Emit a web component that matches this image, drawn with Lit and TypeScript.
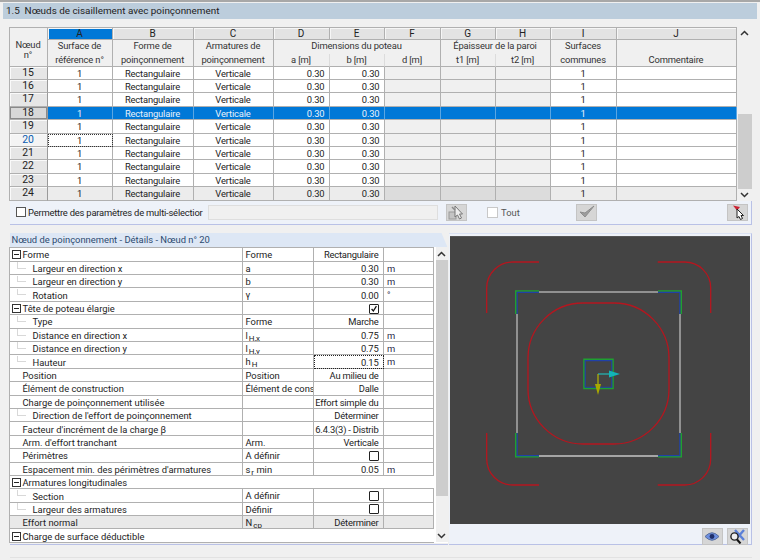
import { LitElement, html, css, svg } from "lit";
import { customElement } from "lit/decorators.js";

const rowNumbers = [15, 16, 17, 18, 19, 20, 21, 22, 23, 24];

interface DetailRow {
  name: string;
  level: number; // 0 = plain, 1 = child, 2 = group with box
  sym?: unknown;
  value?: string;
  unit?: string;
  check?: "on" | "off";
  wide?: boolean;
  focus?: boolean;
  shaded?: boolean;
}

const sub = (a: string, b: string, rest = "") => html`${a}<span class="sub">${b}</span>${rest}`;

const details: DetailRow[] = [
  { name: "Forme", level: 2, sym: "Forme", value: "Rectangulaire" },
  { name: "Largeur en direction x", level: 1, sym: "a", value: "0.30", unit: "m" },
  { name: "Largeur en direction y", level: 1, sym: "b", value: "0.30", unit: "m" },
  { name: "Rotation", level: 1, sym: "γ", value: "0.00", unit: "°" },
  { name: "Tête de poteau élargie", level: 2, check: "on" },
  { name: "Type", level: 1, sym: "Forme", value: "Marche" },
  { name: "Distance en direction x", level: 1, sym: sub("l", "H,x"), value: "0.75", unit: "m" },
  { name: "Distance en direction y", level: 1, sym: sub("l", "H,y"), value: "0.75", unit: "m" },
  { name: "Hauteur", level: 1, sym: sub("h", "H"), value: "0.15", unit: "m", focus: true },
  { name: "Position", level: 0, sym: "Position", value: "Au milieu de" },
  { name: "Élément de construction", level: 0, sym: "Élément de cons", value: "Dalle" },
  { name: "Charge de poinçonnement utilisée", level: 0, value: "Effort simple du" },
  { name: "Direction de l'effort de poinçonnement", level: 1, value: "Déterminer" },
  { name: "Facteur d'incrément de la charge β", level: 0, value: "6.4.3(3) - Distrib" },
  { name: "Arm. d'effort tranchant", level: 0, sym: "Arm.", value: "Verticale" },
  { name: "Périmètres", level: 0, sym: "A définir", check: "off" },
  { name: "Espacement min. des périmètres d'armatures", level: 0, sym: sub("s", "r", " min"), value: "0.05", unit: "m" },
  { name: "Armatures longitudinales", level: 2, wide: true },
  { name: "Section", level: 1, sym: "A définir", check: "off" },
  { name: "Largeur des armatures", level: 1, sym: "Définir", check: "off" },
  { name: "Effort normal", level: 0, sym: sub("N", "cp"), value: "Déterminer", shaded: true },
  { name: "Charge de surface déductible", level: 2, wide: true },
];

/* =========================
   ICONS
========================= */
const chevronUp = html`<svg width="9" height="6" viewBox="0 0 9 6"><path d="M1 5 L4.5 1.5 L8 5" fill="none" stroke="#333" stroke-width="1.5"/></svg>`;
const chevronDown = html`<svg width="9" height="6" viewBox="0 0 9 6"><path d="M1 1 L4.5 4.5 L8 1" fill="none" stroke="#333" stroke-width="1.5"/></svg>`;

const tickMark = html`<svg width="10" height="10" viewBox="0 0 10 10"><path d="M2 5 L4.2 7.5 L8 1.5" fill="none" stroke="#111" stroke-width="1.6"/></svg>`;

const iconTableCursor = html`<svg width="18" height="15" viewBox="0 0 18 15">
  <rect x="2" y="7" width="7" height="7" fill="#c4c4c4" stroke="#9a9a9a"/>
  <path d="M8 1 L8 12 L10.5 10 L12.5 14 L14.5 13 L12.5 9 L15.5 9 Z" fill="#eee" stroke="#777"/>
  <path d="M5 2 L8 5" stroke="#8a8a8a" stroke-width="1.5"/>
</svg>`;

const iconCheck = html`<svg width="18" height="14" viewBox="0 0 18 14">
  <path d="M2 7 L7 12 L16 1 L7 8 Z" fill="#9d9d9d" stroke="#8c8c8c"/>
</svg>`;

const iconPin = html`<svg width="18" height="15" viewBox="0 0 18 15">
  <path d="M4 0.5 L11 2 L8 5.5 Z" fill="#cc2233"/>
  <path d="M8 4 L8 13 L10 11.5 L11.5 14.5 L13.5 13.5 L12 10.5 L14.5 10.5 Z" fill="#fff" stroke="#222"/>
</svg>`;

const iconEye = html`<svg width="16" height="11" viewBox="0 0 16 11">
  <path d="M1 5.5 Q8 -2 15 5.5 Q8 13 1 5.5 Z" fill="#6d8fe0" stroke="#5a6f9c"/>
  <circle cx="8" cy="5.5" r="2.4" fill="#1f2f6a"/>
</svg>`;

const iconZoomX = html`<svg width="18" height="15" viewBox="0 0 18 15">
  <path d="M7 1 L16 11 M16 1 L9 9" stroke="#5b80d8" stroke-width="2.4" fill="none"/>
  <circle cx="6.5" cy="7.5" r="3.6" fill="#eee" stroke="#222" stroke-width="1.4"/>
  <path d="M9 10.5 L12.5 14.5" stroke="#111" stroke-width="2"/>
</svg>`;

/* =========================
   PREVIEW DRAWING
========================= */
const corner = (d1: string, d2: string) => svg`
  <path d=${d1} fill="none" stroke="#1fa030" stroke-width="1.6"/>
  <path d=${d2} fill="none" stroke="#2140a8" stroke-width="1.1"/>
`;

const drawing = html`<svg class="drawing" viewBox="450 236 300 288" width="300" height="288">
  <g fill="none" stroke="#b5161f" stroke-width="1.3">
    <path d="M486.7 313 V288 A26 26 0 0 1 513 262 H539"/>
    <path d="M657.7 262 H684 A26 26 0 0 1 710.7 288 V313"/>
    <path d="M486.7 433 V459 A26 26 0 0 0 513 485 H539"/>
    <path d="M657.7 485 H684 A26 26 0 0 0 710.7 459 V433"/>
    <rect x="528" y="303" width="141" height="141" rx="55"/>
  </g>
  <g fill="none" stroke="#ababab" stroke-width="1.5">
    <path d="M539 292 H658"/>
    <path d="M517 314 V433"/>
    <path d="M680 314 V433"/>
    <path d="M539 456 H658" stroke="#c6c6c6"/>
  </g>
  ${corner("M515.8 314 V291 H539", "M517.2 314 V292.4 H539")}
  ${corner("M658 291 H681.2 V314", "M658 292.4 H679.8 V314")}
  ${corner("M515.8 433 V456.8 H539", "M517.2 433 V455.6 H539")}
  ${corner("M658 456.8 H681.2 V433", "M658 455.6 H679.8 V433")}
  ${corner("M584 359.4 H613 V388.4 H584 Z", "M585.2 360.6 H611.8 V387.2 H585.2 Z")}
  <path d="M598 374 H610" stroke="#2a9c9c" stroke-width="1.6"/>
  <path d="M609 370.5 L620 374 L609 377.5 Z" fill="#12b5b8"/>
  <path d="M598 374 V385" stroke="#b8b800" stroke-width="1.2"/>
  <path d="M595 384 L598 395 L601 384 Z" fill="#a8a800"/>
</svg>`;

/* =========================
   APP
========================= */
@customElement("app-root")
class AppRoot extends LitElement {
  static styles = css`
    :host {
      display: block;
      width: 760px;
      height: 560px;
      overflow: hidden;
      background: #f0f0f0;
      font-family: Roboto, "Liberation Sans", sans-serif;
      font-size: 9.4px;
      color: #222;
    }
    .top-line {
      height: 1.5px;
      background: #a8a8a8;
    }
    .title {
      margin: 1.5px 3px 0;
      height: 16px;
      padding-left: 3px;
      background: #bccddc;
      font-size: 9.9px;
      line-height: 16px;
      color: #1c1c1c;
      white-space: pre;
    }
    .body {
      padding: 8px 8px 0 9.5px;
    }

    /* upper table */
    .upper {
      width: 742px;
      border-right: 1px solid #b9c1e6;
      background: #eef2f9;
      box-sizing: border-box;
    }
    .upper-main {
      display: flex;
      background: #f0f0f0;
    }
    .grid {
      display: grid;
      grid-template-columns: 38px 65px 81px 80px 56px 55px 56px 55px 55px 66px 120px;
      grid-template-rows: 12px 13.5px 13.1px repeat(10, 13.4px);
      border-left: 1px solid #b0b0b0;
      border-top: 1px solid #b0b0b0;
      margin-left: -1px;
    }
    .cell {
      box-sizing: border-box;
      border-right: 1px solid #b0b0b0;
      border-bottom: 1px solid #b0b0b0;
      background: #fff;
      line-height: 13px;
      text-align: center;
      white-space: nowrap;
      overflow: hidden;
      letter-spacing: -0.15px;
    }
    .letter {
      background: #e3e3e3;
      font-size: 10px;
      line-height: 11px;
      box-shadow: inset 1px 1px 0 #f6f6f6;
    }
    .letter.active {
      background: #0078d7;
    }
    .head {
      background: #f0f0f0;
      border-bottom: none;
      color: #333;
      line-height: 11px;
    }
    .head.bottom {
      border-bottom: 1px solid #b0b0b0;
      line-height: 12px;
    }
    .head.inner {
      border-right-color: #dcdcdc;
    }
    .head.node {
      grid-row: span 3;
      padding-top: 11.5px;
      line-height: 10.5px;
      border-bottom: 1px solid #b0b0b0;
    }
    .head.r2 {
      grid-row: span 2;
      line-height: 14px;
    }
    .head.r2::before {
      content: "";
      display: block;
      margin-top: -1.5px;
    }
    .c3 {
      grid-column: span 3;
    }
    .c2 {
      grid-column: span 2;
    }
    .rowhead {
      background: #e6e6e6;
      font-size: 10.4px;
      line-height: 12px;
      box-shadow: inset 1px 1px 0 #fafafa;
      border-right: 1.5px solid #9a9a9a;
    }
    .rowhead.selected {
      background: #d8d8d8;
      box-shadow: inset 0 0 0 1px #8a8a8a;
    }
    .rowhead.current {
      background: #f4f4f4;
      color: #0a5cb0;
    }
    .num {
      text-align: right;
      padding-right: 4px;
    }
    .off {
      background: #f0f0f0;
    }
    .last {
      background: #ececec;
    }
    .last.off {
      background: #dcdcdc;
    }
    .sel {
      background: #0078d7;
      color: #e8f2fb;
      border-right-color: #5ba6e2;
    }
    .focus {
      outline: 1px dotted #333;
      outline-offset: -1.5px;
    }

    .scroll {
      width: 14px;
      flex: none;
      display: flex;
      flex-direction: column;
      background: #f0f0f0;
    }
    .scroll .arrow {
      height: 13px;
      flex: none;
      display: flex;
      align-items: center;
      justify-content: center;
    }
    .scroll .thumb {
      background: #cdcdcd;
    }
    .upper .scroll {
      margin-left: 1px;
    }
    .upper .scroll .arrow {
      height: 11.8px;
    }
    .upper .track-a {
      height: 75.2px;
      flex: none;
    }
    .upper .thumb {
      height: 74.8px;
      flex: none;
    }

    /* toolbar under the upper table */
    .toolbar {
      height: 24px;
      display: flex;
      align-items: center;
      border-bottom: 1px solid #b9c1e6;
      box-sizing: border-box;
    }
    .box {
      width: 10px;
      height: 10px;
      background: #fff;
      border: 1px solid #555;
      box-sizing: border-box;
      flex: none;
    }
    .box.first {
      margin-left: 6.5px;
      margin-right: 2px;
    }
    .multi {
      width: 179.5px;
      white-space: nowrap;
      letter-spacing: -0.2px;
    }
    .field {
      width: 230px;
      height: 15px;
      background: #f0f0f0;
      border: 1px solid #dedede;
      box-sizing: border-box;
      flex: none;
    }
    .btn {
      width: 21px;
      height: 17px;
      flex: none;
      background: #d6d6d6;
      border: 1px solid #c4c4c4;
      box-sizing: border-box;
      display: flex;
      align-items: center;
      justify-content: center;
    }
    .btn.tb1 {
      margin-left: 8px;
    }
    .box.all {
      margin-left: 20.5px;
      margin-right: 3px;
      border-color: #c8c8c8;
      width: 11px;
      height: 11px;
    }
    .all-label {
      width: 75px;
      color: #555;
    }
    .btn.tb3 {
      margin-left: 130px;
    }

    /* lower part */
    .lower {
      margin-top: 8.5px;
      display: flex;
      gap: 1.5px;
      width: 742px;
    }
    .left {
      width: 438px;
      flex: none;
      border-bottom: 1px solid #b9c1e6;
      height: 312px;
      box-sizing: border-box;
    }
    .tab {
      height: 14.2px;
      line-height: 14.2px;
      padding-left: 2px;
      color: #2c4a70;
      background: #dde7f5;
      clip-path: polygon(0 0, 432px 0, 100% 100%, 0 100%);
    }
    .left-main {
      display: flex;
      background: #fff;
    }
    .dgrid {
      display: grid;
      grid-template-columns: 233px 71px 70px 50.5px;
      grid-auto-rows: 13.4px;
      border-top: 1px solid #b0b0b0;
      border-left: 1px solid #b0b0b0;
      margin-left: -1px;
    }
    .dcell {
      box-sizing: border-box;
      border-right: 1px solid #b0b0b0;
      border-bottom: 1px solid #b0b0b0;
      background: #fff;
      line-height: 13px;
      white-space: nowrap;
      overflow: hidden;
      padding-left: 3px;
    }
    .dcell.value {
      text-align: right;
      padding: 1px 4px 0 0;
      display: flex;
      align-items: center;
      justify-content: flex-end;
      letter-spacing: -0.2px;
    }
    .dcell.name {
      display: flex;
      align-items: center;
      padding: 1px 0 0;
    }
    .dcell.wide {
      grid-column: span 4;
      border-right: none;
    }
    .dcell.shaded {
      background: #e9e9e9;
    }
    .dcell.focus {
      outline: 1px dotted #222;
      outline-offset: -1px;
    }
    .dcell.unit {
      padding-left: 3.5px;
      color: #2a2a4a;
    }
    .sub {
      font-size: 8px;
      vertical-align: -2px;
      line-height: 0;
      margin-left: 1px;
    }
    .plus {
      width: 9px;
      height: 9px;
      margin: 0 1.5px 0 2.5px;
      border: 1px solid #333;
      box-sizing: border-box;
      flex: none;
      display: flex;
      align-items: center;
      justify-content: center;
    }
    .plus::before {
      content: "";
      width: 5px;
      height: 1px;
      background: #222;
    }
    .plain {
      width: 13px;
      flex: none;
    }
    .tick {
      width: 9px;
      height: 6.5px;
      margin: 0 7px 6px 7px;
      border-left: 1px solid #d8d8d8;
      border-bottom: 1px solid #d8d8d8;
      box-sizing: border-box;
      flex: none;
    }
    .chk {
      width: 10px;
      height: 10px;
      border: 1.3px solid #222;
      border-radius: 1px;
      box-sizing: border-box;
      display: flex;
      align-items: center;
      justify-content: center;
    }
    .left .scroll {
      margin-left: 1.5px;
      width: 12px;
      height: 295px;
    }
    .left .thumb {
      height: 236px;
      flex: none;
    }
    .scroll .spacer {
      flex: 1;
    }

    /* preview */
    .right {
      width: 302.5px;
      flex: none;
      height: 312px;
      box-sizing: border-box;
      padding: 2px 0.5px 0 1px;
      background: #eef2f9;
      border-top: 1px solid #dbe2f3;
      border-right: 1px solid #b9c1e6;
      border-bottom: 1px solid #b9c1e6;
    }
    .canvas {
      height: 288px;
      background: #444;
      border-top: 1px solid #555;
      box-sizing: border-box;
    }
    .drawing {
      display: block;
      margin-top: -1px;
    }
    .preview-tools {
      height: 20.5px;
      display: flex;
      justify-content: flex-end;
      align-items: flex-end;
      gap: 4px;
      padding-right: 2.5px;
    }
    .foot-line {
      margin-top: 11.5px;
      height: 1px;
      background: #e2e2e2;
    }
  `;

  renderUpperRow(n: number) {
    const sel = n === 18;
    const last = n === 24;
    const cls = (extra = "") => `cell ${extra} ${sel ? "sel" : ""} ${last ? "last" : ""}`;
    return html`
      <div class="cell rowhead ${sel ? "selected" : ""} ${n === 20 ? "current" : ""}">${n}</div>
      <div class="${cls(n === 20 ? "focus" : "")}">1</div>
      <div class="${cls()}">Rectangulaire</div>
      <div class="${cls()}">Verticale</div>
      <div class="${cls("num")}">0.30</div>
      <div class="${cls("num")}">0.30</div>
      <div class="${cls("off")}"></div>
      <div class="${cls("off")}"></div>
      <div class="${cls("off")}"></div>
      <div class="${cls()}">1</div>
      <div class="${cls()}"></div>
    `;
  }

  renderDetailRow(r: DetailRow) {
    const shaded = r.shaded ? "shaded" : "";
    const lead = r.level === 2
      ? html`<span class="plus"></span>`
      : r.level === 1
        ? html`<span class="tick"></span>`
        : html`<span class="plain"></span>`;
    const name = html`<div class="dcell name ${r.wide ? "wide" : ""} ${shaded}">${lead}${r.name}</div>`;
    if (r.wide) return name;
    return html`
      ${name}
      <div class="dcell ${shaded}">${r.sym ?? ""}</div>
      <div class="dcell value ${shaded} ${r.focus ? "focus" : ""}">
        ${r.check
          ? html`<span class="chk">${r.check === "on" ? tickMark : ""}</span>`
          : r.value ?? ""}
      </div>
      <div class="dcell unit ${shaded}">${r.unit ?? ""}</div>
    `;
  }

  render() {
    return html`
      <div class="top-line"></div>
      <div class="title">1.5  Nœuds de cisaillement avec poinçonnement</div>
      <div class="body">
        <div class="upper">
          <div class="upper-main">
            <div class="grid">
              <div class="cell head node">Nœud<br />n°</div>
              <div class="cell letter active">A</div>
              ${["B", "C", "D", "E", "F", "G", "H", "I", "J"].map(l => html`<div class="cell letter">${l}</div>`)}
              <div class="cell head r2 bottom">Surface de<br />référence n°</div>
              <div class="cell head r2 bottom">Forme de<br />poinçonnement</div>
              <div class="cell head r2 bottom">Armatures de<br />poinçonnement</div>
              <div class="cell head c3">Dimensions du poteau</div>
              <div class="cell head c2">Épaisseur de la paroi</div>
              <div class="cell head r2 bottom">Surfaces<br />communes</div>
              <div class="cell head r2 bottom"><br />Commentaire</div>
              <div class="cell head bottom inner">a [m]</div>
              <div class="cell head bottom inner">b [m]</div>
              <div class="cell head bottom">d [m]</div>
              <div class="cell head bottom inner">t1 [m]</div>
              <div class="cell head bottom">t2 [m]</div>
              ${rowNumbers.map(n => this.renderUpperRow(n))}
            </div>
            <div class="scroll">
              <div class="arrow">${chevronUp}</div>
              <div class="track-a"></div>
              <div class="thumb"></div>
              <div class="arrow">${chevronDown}</div>
            </div>
          </div>
          <div class="toolbar">
            <span class="box first"></span>
            <span class="multi">Permettre des paramètres de multi-sélectior</span>
            <span class="field"></span>
            <span class="btn tb1">${iconTableCursor}</span>
            <span class="box all"></span>
            <span class="all-label">Tout</span>
            <span class="btn">${iconCheck}</span>
            <span class="btn tb3">${iconPin}</span>
          </div>
        </div>

        <div class="lower">
          <div class="left">
            <div class="tab">Nœud de poinçonnement - Détails - Nœud n° 20</div>
            <div class="left-main">
              <div class="dgrid">${details.map(r => this.renderDetailRow(r))}</div>
              <div class="scroll">
                <div class="arrow">${chevronUp}</div>
                <div class="thumb"></div>
                <div class="spacer"></div>
                <div class="arrow">${chevronDown}</div>
              </div>
            </div>
          </div>
          <div class="right">
            <div class="canvas">${drawing}</div>
            <div class="preview-tools">
              <span class="btn">${iconEye}</span>
              <span class="btn">${iconZoomX}</span>
            </div>
          </div>
        </div>
        <div class="foot-line"></div>
      </div>
    `;
  }
}
